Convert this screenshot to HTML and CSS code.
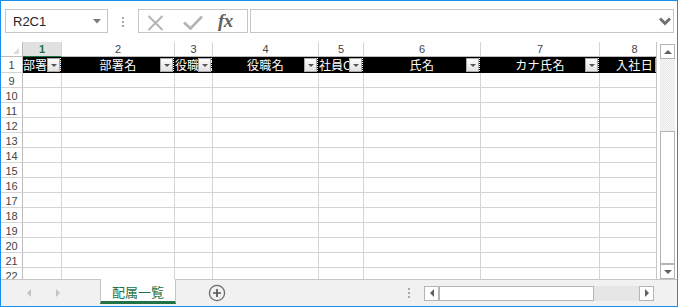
FILE: index.html
```html
<!DOCTYPE html>
<html lang="ja">
<head>
<meta charset="utf-8">
<title>配属一覧</title>
<link rel="stylesheet" href="styles.css">
</head>
<body>
<div class="window">
  <div class="toolbar">
    <div class="namebox">
      <span class="nb-text">R2C1</span>
      <svg class="nb-caret" width="8" height="5" viewBox="0 0 8 5"><path d="M0 0H8L4 4.5Z" fill="#7a7a7a"/></svg>
    </div>
    <div class="vdots"><i></i><i></i><i></i></div>
    <div class="fxbox">
      <svg class="ic-x" width="17" height="16" viewBox="0 0 17 16"><path d="M1.5 1L15.5 15M15.5 1L1.5 15" stroke="#b4b4b4" stroke-width="2" fill="none"/></svg>
      <svg class="ic-check" width="20" height="15" viewBox="0 0 20 15"><path d="M1 7.5L7.5 13.5L19 1.5" stroke="#b4b4b4" stroke-width="2.6" fill="none"/></svg>
      <span class="fx">fx</span>
    </div>
    <div class="formula">
      <svg width="12" height="9" viewBox="0 0 12 9"><path d="M1 1.5L6 6.5L11 1.5" stroke="#707070" stroke-width="3" fill="none"/></svg>
    </div>
  </div>

  <div class="sheet">
    <div class="viewport">
      <div class="grid">
        <div class="corner"></div>
        <div class="ch sel">1</div><div class="ch">2</div><div class="ch">3</div><div class="ch">4</div><div class="ch">5</div><div class="ch">6</div><div class="ch">7</div><div class="ch">8</div>

        <div class="rh">1</div>
        <div class="hc"><span class="t clip">部署CD</span><span class="fb"></span></div>
        <div class="hc"><span class="t">部署名</span><span class="fb"></span></div>
        <div class="hc"><span class="t clip">役職CD</span><span class="fb"></span></div>
        <div class="hc"><span class="t">役職名</span><span class="fb"></span></div>
        <div class="hc"><span class="t clip">社員CD</span><span class="fb"></span></div>
        <div class="hc"><span class="t">氏名</span><span class="fb"></span></div>
        <div class="hc"><span class="t">カナ氏名</span><span class="fb"></span></div>
        <div class="hc"><span class="t">入社日</span><span class="fb"></span></div>

        <div class="rh">9</div><div class="c"></div><div class="c"></div><div class="c"></div><div class="c"></div><div class="c"></div><div class="c"></div><div class="c"></div><div class="c"></div>
        <div class="rh">10</div><div class="c"></div><div class="c"></div><div class="c"></div><div class="c"></div><div class="c"></div><div class="c"></div><div class="c"></div><div class="c"></div>
        <div class="rh">11</div><div class="c"></div><div class="c"></div><div class="c"></div><div class="c"></div><div class="c"></div><div class="c"></div><div class="c"></div><div class="c"></div>
        <div class="rh">12</div><div class="c"></div><div class="c"></div><div class="c"></div><div class="c"></div><div class="c"></div><div class="c"></div><div class="c"></div><div class="c"></div>
        <div class="rh">13</div><div class="c"></div><div class="c"></div><div class="c"></div><div class="c"></div><div class="c"></div><div class="c"></div><div class="c"></div><div class="c"></div>
        <div class="rh">14</div><div class="c"></div><div class="c"></div><div class="c"></div><div class="c"></div><div class="c"></div><div class="c"></div><div class="c"></div><div class="c"></div>
        <div class="rh">15</div><div class="c"></div><div class="c"></div><div class="c"></div><div class="c"></div><div class="c"></div><div class="c"></div><div class="c"></div><div class="c"></div>
        <div class="rh">16</div><div class="c"></div><div class="c"></div><div class="c"></div><div class="c"></div><div class="c"></div><div class="c"></div><div class="c"></div><div class="c"></div>
        <div class="rh">17</div><div class="c"></div><div class="c"></div><div class="c"></div><div class="c"></div><div class="c"></div><div class="c"></div><div class="c"></div><div class="c"></div>
        <div class="rh">18</div><div class="c"></div><div class="c"></div><div class="c"></div><div class="c"></div><div class="c"></div><div class="c"></div><div class="c"></div><div class="c"></div>
        <div class="rh">19</div><div class="c"></div><div class="c"></div><div class="c"></div><div class="c"></div><div class="c"></div><div class="c"></div><div class="c"></div><div class="c"></div>
        <div class="rh">20</div><div class="c"></div><div class="c"></div><div class="c"></div><div class="c"></div><div class="c"></div><div class="c"></div><div class="c"></div><div class="c"></div>
        <div class="rh">21</div><div class="c"></div><div class="c"></div><div class="c"></div><div class="c"></div><div class="c"></div><div class="c"></div><div class="c"></div><div class="c"></div>
        <div class="rh">22</div><div class="c"></div><div class="c"></div><div class="c"></div><div class="c"></div><div class="c"></div><div class="c"></div><div class="c"></div><div class="c"></div>
      </div>
    </div>
    <div class="vscroll">
      <div class="sbtn"><span class="tri-up"></span></div>
      <div class="vtrack"></div>
      <div class="vthumb"></div>
      <div class="sbtn"><span class="tri-down"></span></div>
    </div>
  </div>

  <div class="tabbar">
    <div class="nav"><span class="nav-l"></span><span class="nav-r"></span></div>
    <div class="tab">配属一覧</div>
    <svg class="add" width="18" height="18" viewBox="0 0 18 18"><circle cx="9" cy="9" r="7.6" stroke="#6b6b6b" stroke-width="1.3" fill="none"/><path d="M9 5V13M5 9H13" stroke="#555" stroke-width="1.7"/></svg>
    <div class="hdots"><i></i><i></i><i></i></div>
    <div class="hscroll">
      <div class="hbtn"><span class="tri-left"></span></div>
      <div class="hthumb"></div>
      <div class="htrack"></div>
      <div class="hbtn"><span class="tri-right"></span></div>
    </div>
  </div>
</div>
</body>
</html>
```

FILE: styles.css
```css
* { box-sizing: border-box; }
html, body { margin: 0; padding: 0; }
body {
  width: 678px;
  height: 307px;
  overflow: hidden;
  background: #fff;
  font-family: "Liberation Sans", "Noto Sans CJK JP", sans-serif;
}
.window {
  width: 678px;
  height: 307px;
  border: 1px solid #1a90ee;
  display: flex;
  flex-direction: column;
  background: #fff;
}

/* toolbar */
.toolbar {
  height: 41px;
  flex: none;
  display: flex;
  align-items: flex-start;
  padding: 8px 3px 0 4px;
}
.namebox {
  width: 103px;
  height: 24px;
  border: 1px solid #c6c6c6;
  display: flex;
  align-items: center;
  justify-content: space-between;
  padding: 0 6px 0 7px;
  font-size: 13px;
  color: #262626;
}
.vdots {
  margin: 8px 14px 0;
  display: flex;
  flex-direction: column;
  gap: 2px;
}
.vdots i, .hdots i {
  display: block;
  width: 2px;
  height: 2px;
  background: #a8a8a8;
}
.fxbox {
  width: 110px;
  height: 24px;
  border: 1px solid #c6c6c6;
  display: flex;
  align-items: center;
  padding-left: 8px;
}
.ic-x { margin-top: 3px; }
.ic-check { margin-left: 19px; margin-top: 2px; }
.fx {
  margin-left: 15px;
  font-family: "Liberation Serif", serif;
  font-style: italic;
  font-weight: bold;
  font-size: 19px;
  color: #5e5e5e;
  letter-spacing: -0.5px;
}
.formula {
  flex: 1;
  margin-left: 2px;
  height: 24px;
  border: 1px solid #c6c6c6;
  display: flex;
  align-items: center;
  justify-content: flex-end;
  padding-right: 2px;
}

/* sheet */
.sheet {
  height: 237px;
  flex: none;
  display: flex;
}
.viewport {
  width: 656px;
  overflow: hidden;
  border-right: 1px solid #c6c6c6;
}
.grid {
  display: grid;
  width: 669px;
  grid-template-columns: 22px 39px 113px 38px 106px 45px 117px 119px 70px;
  grid-template-rows: 15px 16px;
  grid-auto-rows: 15px;
}
.c {
  border-right: 1px solid #d4d4d4;
  border-bottom: 1px solid #d4d4d4;
}
.rh {
  border-right: 1px solid #bdbdbd;
  border-bottom: 1px solid #d4d4d4;
  font-size: 11px;
  color: #444;
  display: flex;
  align-items: center;
  justify-content: center;
  padding-top: 1px;
}
.ch {
  border-right: 1px solid #d4d4d4;
  border-bottom: 1px solid #bdbdbd;
  font-size: 11px;
  color: #444;
  display: flex;
  align-items: center;
  justify-content: center;
}
.ch.sel {
  background: #e1e1e1;
  color: #217346;
  font-weight: bold;
  border-bottom: 1px solid #217346;
}
.corner {
  border-right: 1px solid #bdbdbd;
  border-bottom: 1px solid #bdbdbd;
  display: flex;
  align-items: flex-end;
  justify-content: flex-end;
  padding: 0 3px 2px 0;
}
.corner::after {
  content: "";
  border-left: 6px solid transparent;
  border-bottom: 6px solid #dcdcdc;
}
.hc {
  position: relative;
  background: #000;
  color: #fff;
  font-family: "Noto Sans CJK JP", sans-serif;
  font-size: 12px;
  letter-spacing: 0.4px;
  border-right: 1px solid #000;
  border-bottom: 1px solid #000;
  display: flex;
  align-items: center;
  overflow: hidden;
}
.hc .t {
  flex: 1;
  min-width: 0;
  text-align: center;
  white-space: nowrap;
  overflow: hidden;
  line-height: 15px;
}
.hc .t.clip { text-align: left; letter-spacing: 0; }
.fb {
  position: absolute;
  right: 1px;
  top: 1px;
  width: 13px;
  height: 14px;
  border: 1px solid #a9a9a9;
  background: linear-gradient(#fdfdfd, #e2e2e2);
  display: flex;
  align-items: center;
  justify-content: center;
}
.fb::before {
  content: "";
  border-left: 3px solid transparent;
  border-right: 3px solid transparent;
  border-top: 3px solid #555;
}
.fb::after {
  content: "";
  position: absolute;
  right: -2px;
  top: -1px;
  width: 1px;
  height: 15px;
  background: repeating-linear-gradient(#fff 0 1px, transparent 1px 2px);
}

/* vertical scrollbar */
.vscroll {
  width: 20px;
  padding: 2px 2px 0 3px;
  display: flex;
  flex-direction: column;
}
.sbtn {
  height: 15px;
  flex: none;
  border: 1px solid #b4b4b4;
  background: #fff;
  display: flex;
  align-items: center;
  justify-content: center;
}
.tri-up {
  border-left: 4px solid transparent;
  border-right: 4px solid transparent;
  border-bottom: 4px solid #606060;
}
.tri-down {
  border-left: 4px solid transparent;
  border-right: 4px solid transparent;
  border-top: 4px solid #606060;
}
.vtrack {
  height: 72px;
  flex: none;
  background: repeating-conic-gradient(#e6e6e6 0% 25%, #f9f9f9 0% 50%) 0 0 / 2px 2px;
}
.vthumb {
  height: 133px;
  flex: none;
  border: 1px solid #b4b4b4;
  background: #fff;
}

/* tab bar */
.tabbar {
  flex: 1;
  border-top: 1px solid #c6c6c6;
  background: #f1f1f1;
  display: flex;
  align-items: center;
}
.nav {
  width: 99px;
  display: flex;
  align-items: center;
  padding-left: 26px;
  gap: 25px;
}
.nav-l {
  border-top: 4px solid transparent;
  border-bottom: 4px solid transparent;
  border-right: 4px solid #c3c3c3;
}
.nav-r {
  border-top: 4px solid transparent;
  border-bottom: 4px solid transparent;
  border-left: 4px solid #c3c3c3;
}
.tab {
  align-self: flex-start;
  margin-top: -1px;
  width: 76px;
  height: 25px;
  background: #fff;
  border-left: 1px solid #c6c6c6;
  border-right: 1px solid #c6c6c6;
  border-bottom: 3px solid #217346;
  display: flex;
  align-items: center;
  justify-content: center;
  padding-top: 3px;
  color: #217346;
  font-family: "Noto Sans CJK JP", sans-serif;
  font-size: 13px;
}
.add { margin-left: 32px; }
.hdots {
  margin-left: 182px;
  display: flex;
  flex-direction: column;
  gap: 2px;
}
.hscroll {
  margin-left: 14px;
  width: 230px;
  height: 15px;
  display: flex;
}
.hbtn {
  width: 15px;
  border: 1px solid #b4b4b4;
  background: #fff;
  display: flex;
  align-items: center;
  justify-content: center;
}
.tri-left {
  border-top: 4px solid transparent;
  border-bottom: 4px solid transparent;
  border-right: 4px solid #606060;
}
.tri-right {
  border-top: 4px solid transparent;
  border-bottom: 4px solid transparent;
  border-left: 4px solid #606060;
}
.hthumb {
  width: 155px;
  border: 1px solid #b4b4b4;
  background: #fff;
}
.htrack {
  width: 45px;
  background: #e6e6e6;
}
```
